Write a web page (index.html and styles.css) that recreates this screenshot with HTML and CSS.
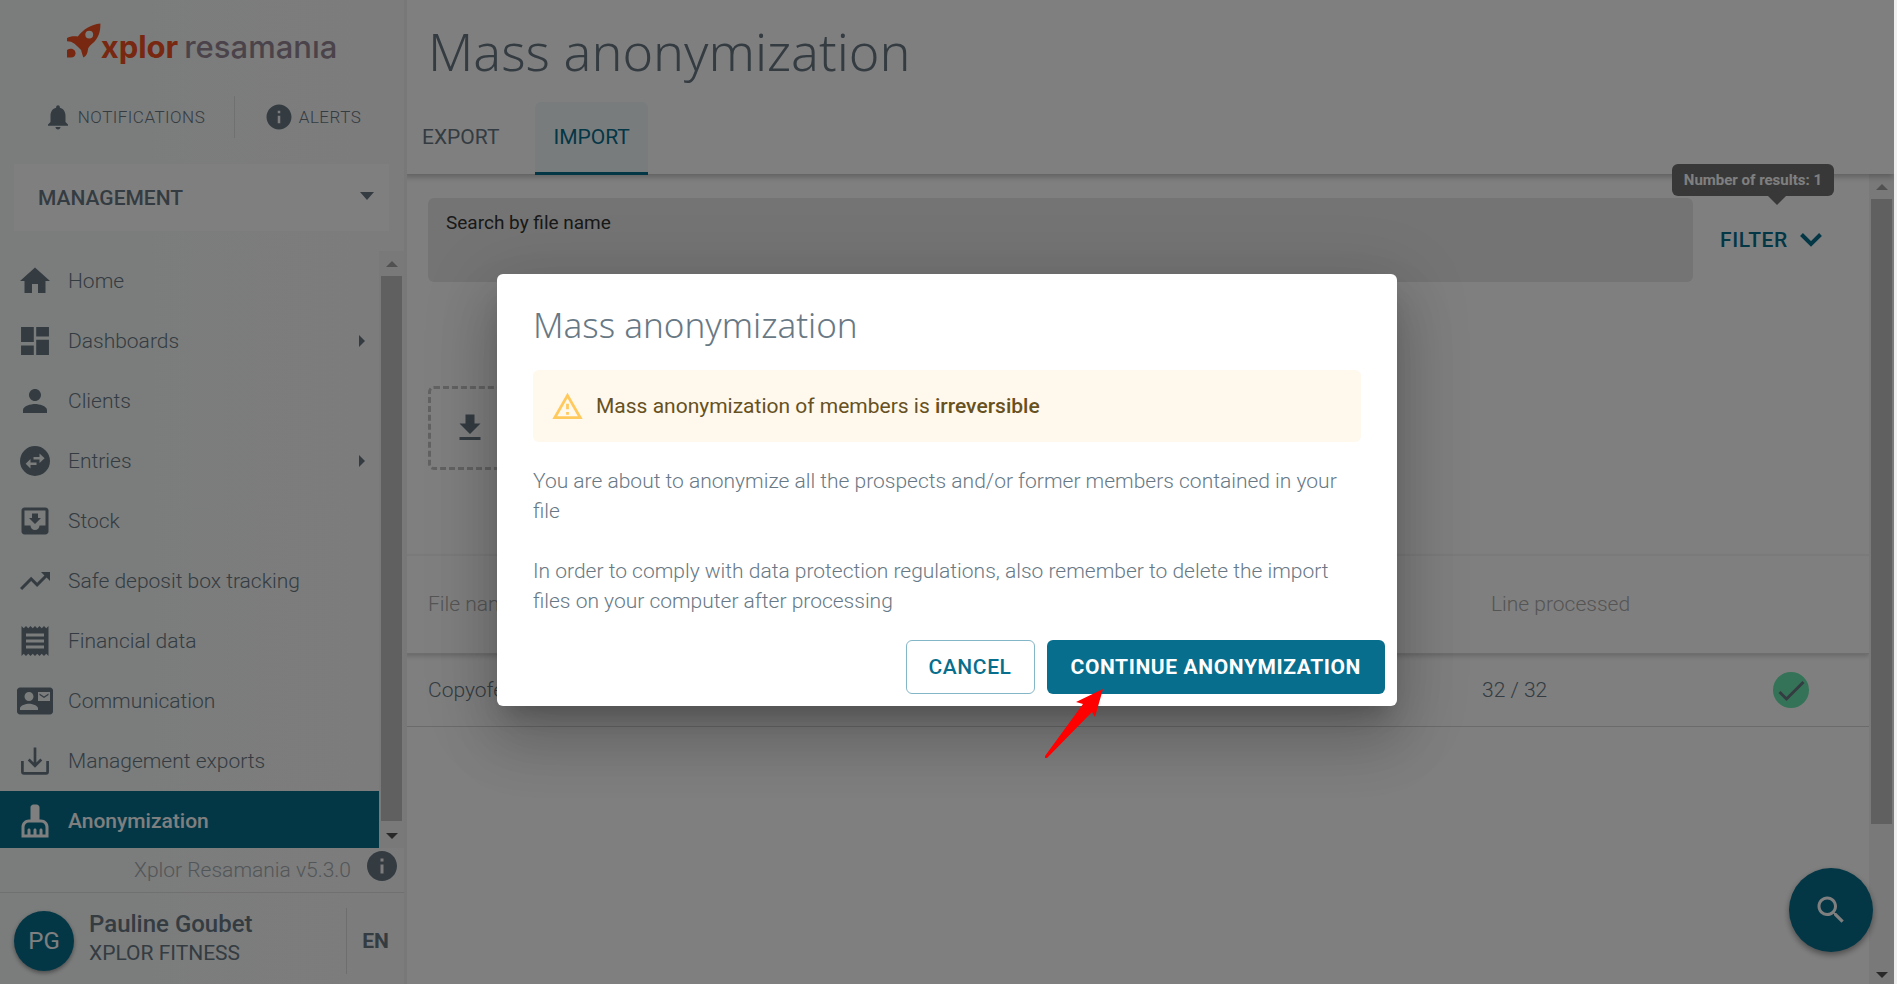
FILE: index.html
```html
<!DOCTYPE html>
<html lang="en">
<head>
    <meta charset="UTF-8">
    <meta name="viewport" content="width=device-width, initial-scale=1.0">
    <title>Mass anonymization</title>
    <link rel="stylesheet" href="styles.css">
</head>
<body>
<div class="app">
    <aside class="sidebar">
        <div class="logo">
            <svg class="rocket" viewBox="200 70 104 106">
                <path fill-rule="evenodd" d="M302 71c1 22-5 41-17 54-10 11-20 15-21 26-1 11-5 19-14 24-3-8-5-16-7-23-7-6-13-13-20-19-7-6-14-8-23-8v-10c9-5 22-6 33-4 16-22 40-37 69-40zM268 93a12 12 0 1 0 0 24 12 12 0 0 0 0-24z"/>
                <path d="M200 152c12-8 26-2 26 10 0 9-6 13-14 13h-12z"/>
            </svg>
            <span class="logo-main">xplor</span>
            <span class="logo-sub">resamanıa</span>
        </div>
        <div class="quick-links">
            <a href="#" class="quick-link">
                <svg class="icon-sm" viewBox="0 0 24 24"><path d="M12 22c1.100 0 2-.9 2-2h-4c0 1.100.89 2 2 2zm6-6v-5c0-3.070-1.640-5.640-4.500-6.320V4c0-.83-.67-1.500-1.500-1.500s-1.500.67-1.500 1.500v.68C7.630 5.360 6 7.920 6 11v5l-2 2v1h16v-1l-2-2z"/></svg>
                NOTIFICATIONS
            </a>
            <a href="#" class="quick-link">
                <svg class="icon-sm" viewBox="0 0 24 24"><path d="M12 2C6.480 2 2 6.480 2 12s4.480 10 10 10 10-4.480 10-10S17.520 2 12 2zm1 15h-2v-6h2v6zm0-8h-2V7h2v2z"/></svg>
                ALERTS
            </a>
        </div>
        <div class="section-select">
            <select aria-label="Section">
                <option>MANAGEMENT</option>
            </select>
            <span class="caret"></span>
        </div>
        <div class="nav-area">
            <nav class="nav">
                <a href="#" class="nav-item">
                    <svg class="icon" viewBox="0 0 24 24"><path d="M10 20v-6h4v6h5v-8h3L12 3 2 12h3v8z"/></svg>
                    <span>Home</span>
                </a>
                <a href="#" class="nav-item">
                    <svg class="icon" viewBox="0 0 24 24"><path d="M2.700 2.700h8.500v9.900H2.700zM2.700 15h8.500v6.300H2.700zM12.800 2.700h8.500V9h-8.500zM12.800 11.200h8.500v10.100h-8.500z"/></svg>
                    <span>Dashboards</span>
                    <i class="sub-arrow"></i>
                </a>
                <a href="#" class="nav-item">
                    <svg class="icon" viewBox="0 0 24 24"><path d="M12 12c2.210 0 4-1.790 4-4s-1.790-4-4-4-4 1.790-4 4 1.790 4 4 4zm0 2c-2.670 0-8 1.340-8 4v2h16v-2c0-2.660-5.330-4-8-4z"/></svg>
                    <span>Clients</span>
                </a>
                <a href="#" class="nav-item">
                    <svg class="icon" viewBox="0 0 24 24"><path fill-rule="evenodd" d="M12 2a10 10 0 1 0 0 20 10 10 0 0 0 0-20zM18.400 10.200L15 13.300V11h-4V9.400h4V7zM5.800 13.800L9 10.700V13h4v1.600H9V17z"/></svg>
                    <span>Entries</span>
                    <i class="sub-arrow"></i>
                </a>
                <a href="#" class="nav-item">
                    <svg class="icon" viewBox="0 0 24 24"><path d="M19 3H4.990c-1.110 0-1.980.9-1.980 2L3 19c0 1.100.88 2 1.990 2H19c1.100 0 2-.9 2-2V5c0-1.100-.9-2-2-2zm0 12h-4c0 1.660-1.350 3-3 3s-3-1.340-3-3H4.990V5H19v10zm-3-5h-2V7h-4v3H8l4 4 4-4z"/></svg>
                    <span>Stock</span>
                </a>
                <a href="#" class="nav-item">
                    <svg class="icon" viewBox="0 0 24 24"><path d="M16 6l2.290 2.290-4.880 4.880-4-4L2 16.590 3.410 18l6-6 4 4 6.300-6.290L22 12V6z"/></svg>
                    <span>Safe deposit box tracking</span>
                </a>
                <a href="#" class="nav-item">
                    <svg class="icon" viewBox="0 0 24 24"><path d="M18 17H6v-2h12v2zm0-4H6v-2h12v2zm0-4H6V7h12v2zM3 22l1.500-1.500L6 22l1.500-1.500L9 22l1.500-1.500L12 22l1.500-1.500L15 22l1.500-1.500L18 22l1.500-1.500L21 22V2l-1.500 1.500L18 2l-1.500 1.500L15 2l-1.500 1.500L12 2l-1.500 1.500L9 2 7.500 3.500 6 2 4.500 3.500 3 2v20z"/></svg>
                    <span>Financial data</span>
                </a>
                <a href="#" class="nav-item">
                    <svg class="icon" viewBox="0 0 24 24"><path d="M21 8V7l-3 2-3-2v1l3 2 3-2zm1-5H2C.9 3 0 3.900 0 5v14c0 1.100.9 2 2 2h20c1.100 0 1.990-.9 1.990-2L24 5c0-1.100-.9-2-2-2zM8 6c1.660 0 3 1.340 3 3s-1.340 3-3 3-3-1.340-3-3 1.340-3 3-3zm6 12H2v-1c0-2 4-3.100 6-3.100s6 1.100 6 3.100v1zm8-6h-8V6h8v6z"/></svg>
                    <span>Communication</span>
                </a>
                <a href="#" class="nav-item">
                    <svg class="icon icon-line" viewBox="0 0 24 24"><path d="M3.600 12v7.200q0 1 1 1h14.800q1 0 1-1V12M12 3v12M7.800 11l4.200 4.200 4.200-4.200"/></svg>
                    <span>Management exports</span>
                </a>
                <a href="#" class="nav-item active">
                    <svg class="icon" viewBox="0 0 24 24"><path d="M16 11h-1V3c0-1.100-.9-2-2-2h-2c-1.100 0-2 .9-2 2v8H8c-2.760 0-5 2.240-5 5v7h18v-7c0-2.760-2.240-5-5-5zm3 10h-2v-3c0-.55-.45-1-1-1s-1 .45-1 1v3h-2v-3c0-.55-.45-1-1-1s-1 .45-1 1v3H9v-3c0-.55-.45-1-1-1s-1 .45-1 1v3H5v-5c0-1.650 1.350-3 3-3h8c1.650 0 3 1.350 3 3v5z"/></svg>
                    <span>Anonymization</span>
                </a>
            </nav>
            <div class="scrollbar">
                <span class="scroll-up"></span>
                <span class="scroll-thumb"></span>
                <span class="scroll-down"></span>
            </div>
        </div>
        <div class="version">
            <span>Xplor Resamania v5.3.0</span>
            <svg class="icon" viewBox="0 0 24 24"><path d="M12 2C6.480 2 2 6.480 2 12s4.480 10 10 10 10-4.480 10-10S17.520 2 12 2zm1 15h-2v-6h2v6zm0-8h-2V7h2v2z"/></svg>
        </div>
        <div class="user">
            <div class="avatar">PG</div>
            <div class="user-info">
                <div class="user-name">Pauline Goubet</div>
                <div class="user-club">XPLOR FITNESS</div>
            </div>
            <button class="lang">EN</button>
        </div>
    </aside>

    <main class="main">
        <header class="page-header">
            <h1>Mass anonymization</h1>
            <nav class="tabs">
                <a href="#" class="tab">EXPORT</a>
                <a href="#" class="tab active">IMPORT</a>
            </nav>
        </header>
        <div class="content-area">
            <div class="content">
                <div class="search-row">
                    <div class="search-box">
                        <label for="search">Search by file name</label>
                        <input type="text" id="search">
                    </div>
                    <div class="filter">
                        <button class="filter-btn">
                            FILTER
                            <svg class="chevron" viewBox="0 0 22 14"><path d="M1.500 1.500L11 11l9.500-9.500"/></svg>
                        </button>
                        <div class="tooltip">Number of results: 1</div>
                    </div>
                </div>
                <div class="drop-zone">
                    <svg class="icon" viewBox="0 0 24 24"><path d="M5 20h14v-2H5zM19 9h-4V3H9v6H5l7 7z"/></svg>
                </div>
                <table class="imports">
                    <thead>
                        <tr><th class="col-file">File name</th><th class="col-lines">Line processed</th><th></th></tr>
                    </thead>
                    <tbody>
                        <tr>
                            <td>Copyofe</td>
                            <td>32 / 32</td>
                            <td>
                                <svg class="status-ok" viewBox="0 0 36 36"><circle cx="18" cy="18" r="18"/><path d="M6.500 20l7 7L30.500 10"/></svg>
                            </td>
                        </tr>
                    </tbody>
                </table>
            </div>
            <div class="scrollbar">
                <span class="scroll-up"></span>
                <span class="scroll-thumb"></span>
                <span class="scroll-down"></span>
            </div>
        </div>
    </main>

    <button class="fab" aria-label="Search">
        <svg class="icon" viewBox="0 0 24 24"><path d="M15.500 14h-.79l-.28-.27C15.410 12.590 16 11.110 16 9.500 16 5.910 13.090 3 9.500 3S3 5.910 3 9.500 5.910 16 9.500 16c1.610 0 3.090-.59 4.230-1.570l.27.28v.79l5 4.990L20.490 19l-4.990-5zm-6 0C7.010 14 5 11.990 5 9.500S7.010 5 9.500 5 14 7.010 14 9.500 11.990 14 9.500 14z"/></svg>
    </button>

    <div class="backdrop">
        <div class="dialog" role="dialog" aria-labelledby="dialog-title">
            <div class="dialog-body">
                <h2 id="dialog-title">Mass anonymization</h2>
                <div class="alert">
                    <svg class="alert-icon" viewBox="0 0 24 24"><path d="M12 2L1 21h22L12 2m0 4l7.530 13H4.470L12 6m-1 4v4h2v-4h-2m0 6v2h2v-2h-2z"/></svg>
                    <span>Mass anonymization of members is <strong>irreversible</strong></span>
                </div>
                <p>You are about to anonymize all the prospects and/or former members contained in your file</p>
                <p>In order to comply with data protection regulations, also remember to delete the import files on your computer after processing</p>
            </div>
            <div class="dialog-actions">
                <button class="btn btn-outline">CANCEL</button>
                <button class="btn btn-primary">CONTINUE ANONYMIZATION</button>
            </div>
            <svg class="pointer" viewBox="0 0 60 70"><path d="M59 0L32 13l7 2L1 67v2h2L48 23l3 5z"/></svg>
        </div>
    </div>
</div>
</body>
</html>
```
FILE: styles.css
```css
* {
    box-sizing: border-box;
}
body {
    margin: 0;
    background-color: #f0f0f0;
    color: #687985;
    font-family: Roboto, sans-serif;
    font-size: 21px;
    font-weight: 300;
}
a {
    color: inherit;
    text-decoration: none;
}
button {
    font-family: inherit;
    font-size: 21px;
    font-weight: 500;
    cursor: pointer;
}
svg {
    fill: currentColor;
    flex-shrink: 0;
}
.icon {
    width: 36px;
    height: 36px;
}
.icon-sm {
    width: 30px;
    height: 30px;
}
.icon-line {
    fill: none;
    stroke: currentColor;
    stroke-width: 1.8;
}
.app {
    position: relative;
    display: flex;
    height: 100vh;
    margin-right: 3px;
    background-color: #fff;
    overflow: hidden;
}

/* Sidebar */
.sidebar {
    position: relative;
    z-index: 1;
    display: flex;
    flex-direction: column;
    flex-shrink: 0;
    width: 404px;
    background: linear-gradient(to right, #f6faf8, #f9f9f9);
    box-shadow: 3px 0 0 #f0f0f0;
}
.logo {
    display: flex;
    align-items: baseline;
    justify-content: center;
    height: 64px;
    padding-top: 23px;
    font-family: Inter, sans-serif;
    font-size: 31px;
    line-height: 31px;
}
.rocket {
    width: 34px;
    height: 35px;
    color: #f04e23;
}
.logo-main {
    color: #f04e23;
    font-weight: 700;
}
.logo-sub {
    margin-left: 6px;
    color: #978695;
    font-weight: 500;
}
.quick-links {
    display: flex;
    margin: 32px 14px 26px;
    font-size: 17px;
    letter-spacing: 0.02857em;
}
.quick-link {
    display: flex;
    align-items: center;
    justify-content: center;
    gap: 5px;
    flex: 1;
    height: 42px;
}
.quick-link:first-child {
    flex: 0 0 221px;
    border-right: 1px solid #e0e0e0;
}
.quick-link .icon-sm {
    color: #687985;
}
.section-select {
    position: relative;
    margin: 0 15px 20px 14px;
}
.section-select select {
    width: 100%;
    height: 67px;
    padding: 0 24px;
    border: none;
    appearance: none;
    background-color: #fff;
    color: #687985;
    font-family: inherit;
    font-size: 21px;
    font-weight: 500;
}
.caret {
    position: absolute;
    right: 15px;
    top: 28px;
    border: 7px solid transparent;
    border-top: 8px solid #687985;
    border-bottom: none;
}
.nav-area {
    display: flex;
    flex: 1;
    min-height: 0;
}
.nav {
    display: flex;
    flex-direction: column;
    flex: 1;
    overflow: hidden;
}
.nav-item {
    display: flex;
    align-items: center;
    flex-shrink: 0;
    gap: 15px;
    height: 60px;
    padding: 0 14px 0 17px;
}
.nav-item.active {
    background-color: #076e8d;
    color: #fff;
    font-weight: 500;
}
.sub-arrow {
    margin-left: auto;
    border: 6px solid transparent;
    border-left-color: #687985;
    border-right: none;
}
.scrollbar {
    display: flex;
    flex-direction: column;
    align-items: center;
    flex-shrink: 0;
    width: 25px;
    background-color: #f3f3f3;
}
.scroll-up, .scroll-down {
    display: flex;
    align-items: center;
    justify-content: center;
    height: 25px;
}
.scroll-up::before {
    content: "";
    border: 6px solid transparent;
    border-top: none;
    border-bottom-color: #a3a3a3;
}
.scroll-down {
    margin-top: auto;
}
.scroll-down::before {
    content: "";
    border: 6px solid transparent;
    border-bottom: none;
    border-top-color: #505050;
}
.scroll-thumb {
    width: 21px;
    height: 82%;
    background-color: #c1c1c1;
}
.sidebar .scroll-thumb {
    height: auto;
    flex: 1;
    margin-bottom: 2px;
}
.version {
    display: flex;
    align-items: center;
    justify-content: flex-end;
    gap: 13px;
    height: 45px;
    padding-right: 4px;
    border-bottom: 1px solid #e0e0e0;
    color: #a6adb2;
}
.version .icon {
    margin-bottom: 8px;
    color: #687985;
}
.user {
    display: flex;
    align-items: center;
    height: 91px;
    padding: 4px 0 0 14px;
}
.avatar {
    display: flex;
    align-items: center;
    justify-content: center;
    width: 60px;
    height: 60px;
    margin-right: 15px;
    border-radius: 50%;
    background-color: #076e8d;
    box-shadow: 0 2px 4px rgba(0, 0, 0, 0.4);
    color: #fff;
    font-size: 24px;
    font-weight: 400;
}
.user-info {
    flex: 1;
    padding-bottom: 4px;
    font-weight: 400;
    line-height: 29px;
}
.user-name {
    font-size: 24px;
    font-weight: 500;
}
.lang {
    width: 58px;
    height: 66px;
    padding: 0;
    border: none;
    border-left: 1px solid #dcdcdc;
    background: none;
    color: #687985;
    font-weight: 700;
}

/* Main */
.main {
    display: flex;
    flex-direction: column;
    flex: 1;
    min-width: 0;
}
.page-header {
    position: relative;
    height: 174px;
    box-shadow: 0 3px 6px rgba(0, 0, 0, 0.25);
}
h1, h2 {
    margin: 0;
    font-family: "Noto Sans", sans-serif;
    font-weight: 300;
}
h1 {
    padding: 0 24px;
    font-size: 52px;
    line-height: 102px;
}
.tabs {
    display: flex;
    gap: 18px;
}
.tab {
    padding: 0 18px;
    line-height: 70px;
    font-weight: 400;
    border-bottom: 3px solid transparent;
}
.tab.active {
    border-bottom-color: #076e8d;
    border-radius: 6px 6px 0 0;
    background-color: #f0f9fb;
    color: #076e8d;
}
.content-area {
    display: flex;
    flex: 1;
    min-height: 0;
}
.content {
    flex: 1;
}
.search-row {
    display: flex;
    margin: 24px 0 104px 24px;
}
.search-box {
    flex: 1;
    height: 84px;
    padding: 12px 18px;
    border-radius: 6px;
    background-color: #e8e8e8;
}
.search-box label {
    display: block;
    color: #333;
    font-size: 19px;
    font-weight: 400;
    line-height: 26px;
}
.search-box input {
    width: 100%;
    padding: 0;
    border: none;
    outline: none;
    background: none;
    font: inherit;
}
.filter {
    position: relative;
    display: flex;
    align-items: center;
    justify-content: center;
    width: 176px;
    padding-right: 20px;
}
.filter-btn {
    display: flex;
    align-items: center;
    gap: 12px;
    padding: 0;
    border: none;
    background: none;
    color: #076e8d;
    letter-spacing: 0.02857em;
}
.chevron {
    width: 22px;
    height: 14px;
    fill: none;
    stroke: currentColor;
    stroke-width: 4;
}
.tooltip {
    position: absolute;
    right: 35px;
    bottom: 86px;
    z-index: 1;
    padding: 0 12px;
    border-radius: 6px;
    background-color: #707070;
    color: #fff;
    font-size: 15px;
    font-weight: 700;
    line-height: 32px;
    white-space: nowrap;
}
.tooltip::after {
    content: "";
    position: absolute;
    right: 48px;
    top: 100%;
    border: 9px solid transparent;
    border-top-color: #707070;
    border-bottom: none;
}
.drop-zone {
    display: flex;
    align-items: center;
    width: 50%;
    height: 84px;
    margin: 0 0 84px 24px;
    padding-left: 21px;
    border: 3px dashed #c4c4c4;
    border-radius: 6px;
}
.imports {
    width: 100%;
    border-collapse: collapse;
}
.imports thead tr {
    box-shadow: 0 3px 5px rgba(0, 0, 0, 0.2);
}
.imports th {
    height: 98px;
    padding: 0;
    border-top: 2px solid #f4f4f4;
    border-bottom: 1px solid #ddd;
    color: #aaa;
    font-weight: 300;
    text-align: left;
}
.imports td {
    height: 73px;
    padding: 0;
    border-bottom: 1px solid #d6d6d6;
}
.imports td:first-child, .imports th:first-child {
    padding-left: 24px;
}
.imports .col-file {
    width: 1078px;
}
.imports .col-lines {
    width: 291px;
    padding-left: 9px;
}
.status-ok {
    display: block;
    width: 36px;
    height: 36px;
}
.status-ok circle {
    fill: #69e6ae;
}
.status-ok path {
    fill: none;
    stroke: #687985;
    stroke-width: 3;
}
.content-area .scroll-thumb {
    height: 625px;
    flex-shrink: 1;
}
.content-area .scroll-down {
    height: 18px;
}
.fab {
    position: absolute;
    right: 21px;
    bottom: 32px;
    display: flex;
    align-items: center;
    justify-content: center;
    width: 84px;
    height: 84px;
    border: none;
    border-radius: 50%;
    background-color: #076e8d;
    box-shadow: 0 3px 6px rgba(0, 0, 0, 0.4);
    color: #fff;
}

/* Dialog */
.backdrop {
    position: absolute;
    inset: 0;
    z-index: 2;
    display: flex;
    align-items: center;
    justify-content: center;
    padding-bottom: 4px;
    background-color: rgba(0, 0, 0, 0.5);
}
.dialog {
    position: relative;
    width: 900px;
    border-radius: 6px;
    background-color: #fff;
    box-shadow: 0 16px 22px -10px rgba(0, 0, 0, 0.2),
        0 36px 57px 4px rgba(0, 0, 0, 0.14),
        0 14px 69px 12px rgba(0, 0, 0, 0.12);
}
.dialog-body {
    padding: 24px 36px 0;
    line-height: 30px;
}
h2 {
    margin-bottom: 18px;
    font-size: 35px;
    line-height: 54px;
}
.alert {
    display: flex;
    align-items: center;
    gap: 12px;
    height: 72px;
    margin-bottom: 24px;
    padding: 0 18px;
    border-radius: 6px;
    background-color: #fff8ec;
    color: #66511f;
    font-weight: 400;
}
.alert strong {
    font-weight: 500;
}
.alert-icon {
    width: 33px;
    height: 33px;
    color: #ffc95c;
}
.dialog p {
    margin: 0 0 30px;
}
.dialog p:last-child {
    margin-bottom: 24px;
}
.dialog-actions {
    display: flex;
    justify-content: flex-end;
    gap: 12px;
    padding: 0 12px 12px;
}
.btn {
    height: 54px;
    padding: 0 24px;
    border: none;
    border-radius: 6px;
    letter-spacing: 0.02857em;
}
.btn-outline {
    padding: 0 22px;
    border: 1px solid #83b6c6;
    background-color: #fff;
    color: #076e8d;
}
.btn-primary {
    background-color: #076e8d;
    color: #fff;
    font-weight: 700;
}
.pointer {
    position: absolute;
    left: 547px;
    top: 415px;
    width: 60px;
    height: 70px;
    color: #f00;
}
```
